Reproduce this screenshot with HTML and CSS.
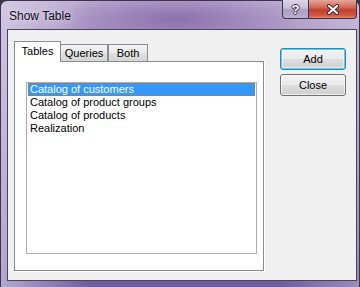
FILE: index.html
```html
<!DOCTYPE html>
<html lang="en">
  <head>
    <meta charset="UTF-8" />
    <title>Show Table</title>
    <link rel="stylesheet" href="styles.css">
  </head>
  <body>
    <div class="window">
      <div class="titlebar">
        <span class="title">Show Table</span>
        <div class="caption">
          <span class="cap-btn help">?</span>
          <span class="cap-btn close">
            <svg width="12" height="11" viewBox="0 0 12 11">
              <path d="M2 2 L10 9 M10 2 L2 9" stroke="#3a2a3a" stroke-width="4.2" stroke-linecap="round" fill="none" />
              <path d="M2 2 L10 9 M10 2 L2 9" stroke="#ffffff" stroke-width="2.2" stroke-linecap="round" fill="none" />
            </svg>
          </span>
        </div>
      </div>

      <div class="client">
        <div class="tabs-area">
          <div class="tab-strip">
            <span class="tab active">Tables</span>
            <span class="tab queries">Queries</span>
            <span class="tab both">Both</span>
          </div>
          <div class="tab-panel">
            <ul class="listbox">
              <li class="selected">Catalog of customers</li>
              <li>Catalog of product groups</li>
              <li>Catalog of products</li>
              <li>Realization</li>
            </ul>
          </div>
        </div>

        <div class="buttons">
          <button class="btn default">Add</button>
          <button class="btn">Close</button>
        </div>
      </div>
    </div>
  </body>
</html>
```

FILE: styles.css
```css
body {
  margin: 0;
  padding: 0;
  background-color: #3a3a3e;
  font-family: "Liberation Sans", Arial, sans-serif;
  font-size: 11px;
  color: #000;
}
.window {
  width: 350px;
  height: 286px;
  border: 1px solid #3b3350;
  border-bottom: none;
  border-radius: 7px 7px 0 0;
  padding: 0 2px 0 6px;
  background:
    radial-gradient(ellipse 120px 28px at 175px 18px, rgba(135, 105, 170, 0.85), rgba(135, 105, 170, 0)),
    linear-gradient(to right, rgba(235, 230, 245, 0.55), rgba(235, 230, 245, 0) 25%, rgba(235, 230, 245, 0) 78%, rgba(235, 230, 245, 0.35)),
    linear-gradient(#b9a8cf, #ab98c4 30px, #9380b6 140px, #715c9b 280px);
}
.titlebar {
  height: 28px;
  display: flex;
  justify-content: space-between;
  align-items: flex-start;
}
.title {
  padding: 7px 0 0 2px;
  font-size: 12px;
  line-height: 16px;
  color: #101020;
  text-shadow: 0 0 6px rgba(255, 255, 255, 0.8);
}
.caption {
  display: flex;
  margin-top: -1px;
}
.cap-btn {
  display: flex;
  align-items: center;
  justify-content: center;
  height: 18px;
  border: 1px solid #3d3450;
  border-top: none;
}
.help {
  width: 25px;
  border-radius: 0 0 0 4px;
  background: linear-gradient(#dcd4e6, #c9bdd8 45%, #ab9cc2 55%, #bcafcf);
  color: #fff;
  font-weight: bold;
  font-size: 13px;
  text-shadow: 1px 0 0 #3a3048, -1px 0 0 #3a3048, 0 1px 0 #3a3048, 0 -1px 0 #3a3048;
}
.close {
  width: 47px;
  border-left: none;
  border-radius: 0 0 4px 0;
  background: linear-gradient(#e7a79b, #d26a58 40%, #c23e2a 55%, #cf5a3f 85%, #e0866a);
}
.client {
  display: flex;
  height: 239px;
  border: 1px solid #4a4458;
  background-color: #f0f0f0;
  padding: 11px 0 0 6px;
}
.tabs-area {
  width: 250px;
}
.tab-strip {
  display: flex;
  align-items: flex-end;
  height: 20px;
}
.tab {
  box-sizing: border-box;
  height: 17px;
  padding-top: 2px;
  line-height: 13px;
  text-align: center;
  border: 1px solid #898c95;
  border-bottom: none;
  background: linear-gradient(#f3f3f3, #ebebeb 45%, #dedede 55%, #d6d6d6);
}
.tab.active {
  position: relative;
  z-index: 1;
  width: 47px;
  height: 21px;
  margin-bottom: -1px;
  padding-top: 3px;
  background: #fff;
}
.tab.queries {
  width: 48px;
  margin-left: -1px;
}
.tab.both {
  width: 40px;
}
.tab-panel {
  box-sizing: border-box;
  height: 210px;
  border: 1px solid #898c95;
  background-color: #fff;
  box-shadow: 1px 1px 0 #fff;
  padding: 20px 6px 0 11px;
}
.listbox {
  list-style: none;
  margin: 0;
  padding: 0 1px;
  height: 170px;
  border: 1px solid #abadb3;
}
.listbox li {
  height: 13px;
  line-height: 13px;
  padding-left: 2px;
  white-space: nowrap;
}
.listbox li.selected {
  background-color: #3399ff;
  color: #fff;
  outline: 1px dotted #b5732a;
  outline-offset: -1px;
}
.buttons {
  display: flex;
  flex-direction: column;
  gap: 4px;
  margin: 7px 0 0 16px;
}
.btn {
  width: 66px;
  height: 22px;
  padding: 0;
  font-family: inherit;
  font-size: 11px;
  line-height: 20px;
  color: #000;
  border: 1px solid #707070;
  border-radius: 3px;
  background: linear-gradient(#f2f2f2, #ebebeb 48%, #dddddd 52%, #cfcfcf);
  box-shadow: inset 0 0 0 1px rgba(255, 255, 255, 0.7);
}
.btn.default {
  border-color: #3c7fb1;
  box-shadow: inset 0 0 0 1px #48d5f3, inset 0 0 0 2px rgba(255, 255, 255, 0.5);
}
```
